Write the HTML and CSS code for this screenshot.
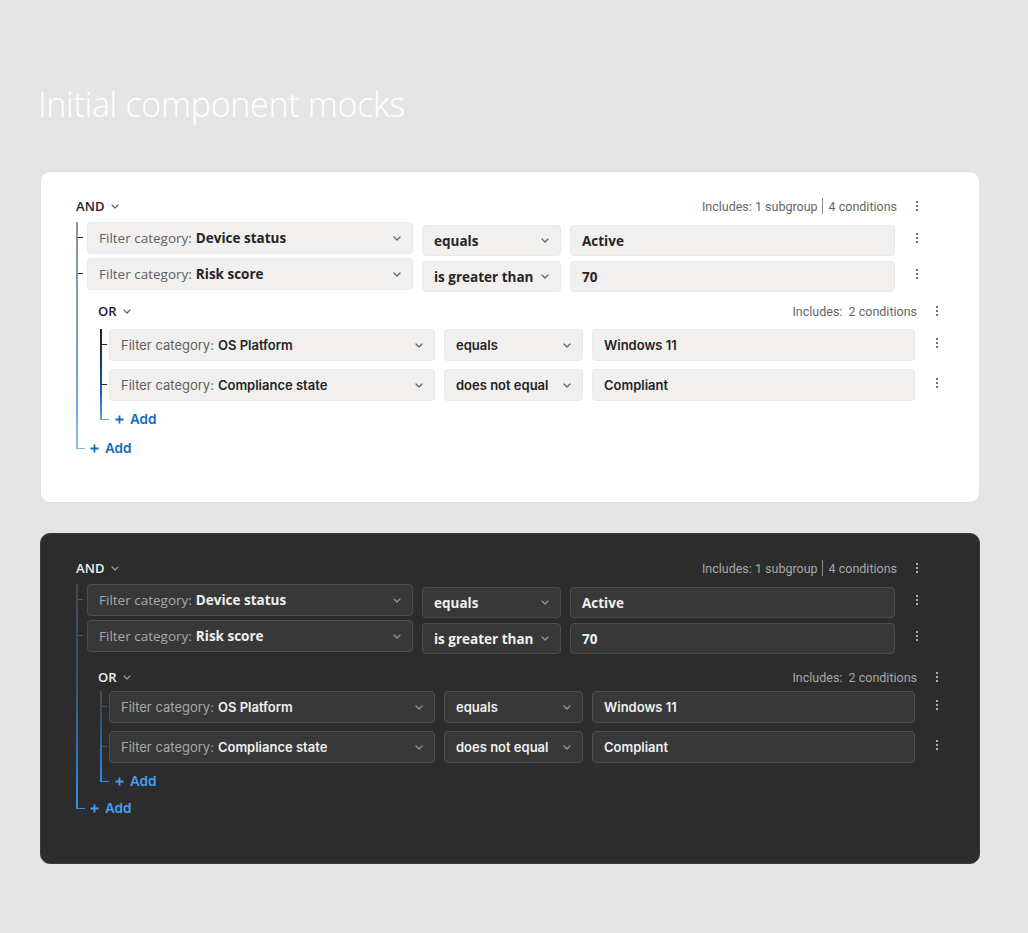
FILE: index.html
```html
<!DOCTYPE html>
<html lang="en">
<head>
<meta charset="utf-8">
<title>Initial component mocks</title>
<link rel="stylesheet" href="styles.css">
</head>
<body>
<main class="page">
  <h1 class="title">Initial component mocks</h1>

  <section class="card card--light">
    <div class="group group--and">
      <div class="group-head">
        <span class="logic">AND <svg class="chev" viewBox="0 0 8 5"><path d="M1 1l3 3 3-3"/></svg></span>
        <span class="includes"><span>Includes: 1 subgroup</span><span class="sep"></span><span>4 conditions</span></span>
        <span class="kebab"><i></i><i></i><i></i></span>
      </div>
      <div class="tree">
        <div class="tree-line"></div>
        <div class="tree-items">
          <div class="cond">
            <span class="tick"></span>
            <div class="field field--cat"><span class="label">Filter category:</span><b>Device status</b><svg class="chev" viewBox="0 0 8 5"><path d="M1 1l3 3 3-3"/></svg></div>
            <div class="field field--op"><b>equals</b><svg class="chev" viewBox="0 0 8 5"><path d="M1 1l3 3 3-3"/></svg></div>
            <div class="field field--val"><b>Active</b></div>
            <span class="kebab"><i></i><i></i><i></i></span>
          </div>
          <div class="cond">
            <span class="tick"></span>
            <div class="field field--cat"><span class="label">Filter category:</span><b>Risk score</b><svg class="chev" viewBox="0 0 8 5"><path d="M1 1l3 3 3-3"/></svg></div>
            <div class="field field--op"><b>is greater than</b><svg class="chev" viewBox="0 0 8 5"><path d="M1 1l3 3 3-3"/></svg></div>
            <div class="field field--val"><b>70</b></div>
            <span class="kebab"><i></i><i></i><i></i></span>
          </div>

          <div class="group group--or">
            <div class="group-head">
              <span class="logic">OR <svg class="chev" viewBox="0 0 8 5"><path d="M1 1l3 3 3-3"/></svg></span>
              <span class="includes">Includes:&nbsp; 2 conditions</span>
              <span class="kebab"><i></i><i></i><i></i></span>
            </div>
            <div class="tree">
              <div class="tree-line"></div>
              <div class="tree-items">
                <div class="cond">
                  <span class="tick"></span>
                  <div class="field field--cat"><span class="label">Filter category:</span><b>OS Platform</b><svg class="chev" viewBox="0 0 8 5"><path d="M1 1l3 3 3-3"/></svg></div>
                  <div class="field field--op"><b>equals</b><svg class="chev" viewBox="0 0 8 5"><path d="M1 1l3 3 3-3"/></svg></div>
                  <div class="field field--val"><b>Windows 11</b></div>
                  <span class="kebab"><i></i><i></i><i></i></span>
                </div>
                <div class="cond">
                  <span class="tick"></span>
                  <div class="field field--cat"><span class="label">Filter category:</span><b>Compliance state</b><svg class="chev" viewBox="0 0 8 5"><path d="M1 1l3 3 3-3"/></svg></div>
                  <div class="field field--op"><b>does not equal</b><svg class="chev" viewBox="0 0 8 5"><path d="M1 1l3 3 3-3"/></svg></div>
                  <div class="field field--val"><b>Compliant</b></div>
                  <span class="kebab"><i></i><i></i><i></i></span>
                </div>
                <div class="add-row">
                  <span class="tick tick--end"></span>
                  <span class="add"><svg class="plus" viewBox="0 0 10 10"><path d="M5 0.5v9M0.5 5h9"/></svg>Add</span>
                </div>
              </div>
            </div>
          </div>

          <div class="add-row add-row--outer">
            <span class="tick tick--end"></span>
            <span class="add"><svg class="plus" viewBox="0 0 10 10"><path d="M5 0.5v9M0.5 5h9"/></svg>Add</span>
          </div>
        </div>
      </div>
    </div>
  </section>

  <section class="card card--dark">
    <div class="group group--and">
      <div class="group-head">
        <span class="logic">AND <svg class="chev" viewBox="0 0 8 5"><path d="M1 1l3 3 3-3"/></svg></span>
        <span class="includes"><span>Includes: 1 subgroup</span><span class="sep"></span><span>4 conditions</span></span>
        <span class="kebab"><i></i><i></i><i></i></span>
      </div>
      <div class="tree">
        <div class="tree-line"></div>
        <div class="tree-items">
          <div class="cond">
            <span class="tick"></span>
            <div class="field field--cat"><span class="label">Filter category:</span><b>Device status</b><svg class="chev" viewBox="0 0 8 5"><path d="M1 1l3 3 3-3"/></svg></div>
            <div class="field field--op"><b>equals</b><svg class="chev" viewBox="0 0 8 5"><path d="M1 1l3 3 3-3"/></svg></div>
            <div class="field field--val"><b>Active</b></div>
            <span class="kebab"><i></i><i></i><i></i></span>
          </div>
          <div class="cond">
            <span class="tick"></span>
            <div class="field field--cat"><span class="label">Filter category:</span><b>Risk score</b><svg class="chev" viewBox="0 0 8 5"><path d="M1 1l3 3 3-3"/></svg></div>
            <div class="field field--op"><b>is greater than</b><svg class="chev" viewBox="0 0 8 5"><path d="M1 1l3 3 3-3"/></svg></div>
            <div class="field field--val"><b>70</b></div>
            <span class="kebab"><i></i><i></i><i></i></span>
          </div>

          <div class="group group--or">
            <div class="group-head">
              <span class="logic">OR <svg class="chev" viewBox="0 0 8 5"><path d="M1 1l3 3 3-3"/></svg></span>
              <span class="includes">Includes:&nbsp; 2 conditions</span>
              <span class="kebab"><i></i><i></i><i></i></span>
            </div>
            <div class="tree">
              <div class="tree-line"></div>
              <div class="tree-items">
                <div class="cond">
                  <span class="tick"></span>
                  <div class="field field--cat"><span class="label">Filter category:</span><b>OS Platform</b><svg class="chev" viewBox="0 0 8 5"><path d="M1 1l3 3 3-3"/></svg></div>
                  <div class="field field--op"><b>equals</b><svg class="chev" viewBox="0 0 8 5"><path d="M1 1l3 3 3-3"/></svg></div>
                  <div class="field field--val"><b>Windows 11</b></div>
                  <span class="kebab"><i></i><i></i><i></i></span>
                </div>
                <div class="cond">
                  <span class="tick"></span>
                  <div class="field field--cat"><span class="label">Filter category:</span><b>Compliance state</b><svg class="chev" viewBox="0 0 8 5"><path d="M1 1l3 3 3-3"/></svg></div>
                  <div class="field field--op"><b>does not equal</b><svg class="chev" viewBox="0 0 8 5"><path d="M1 1l3 3 3-3"/></svg></div>
                  <div class="field field--val"><b>Compliant</b></div>
                  <span class="kebab"><i></i><i></i><i></i></span>
                </div>
                <div class="add-row">
                  <span class="tick tick--end"></span>
                  <span class="add"><svg class="plus" viewBox="0 0 10 10"><path d="M5 0.5v9M0.5 5h9"/></svg>Add</span>
                </div>
              </div>
            </div>
          </div>

          <div class="add-row add-row--outer">
            <span class="tick tick--end"></span>
            <span class="add"><svg class="plus" viewBox="0 0 10 10"><path d="M5 0.5v9M0.5 5h9"/></svg>Add</span>
          </div>
        </div>
      </div>
    </div>
  </section>
</main>
</body>
</html>
```

FILE: styles.css
```css
* { box-sizing: border-box; }

html, body {
  margin: 0;
  padding: 0;
  background: #e5e5e5;
}

body {
  font-family: "Open Sans", "Noto Sans", sans-serif;
  color: #242424;
}

.page {
  width: 1028px;
  padding: 83px 48px 0 40px;
}

.title {
  margin: 0 0 46px -2px;
  font-family: "Open Sans", sans-serif;
  font-weight: 300;
  font-size: 34px;
  line-height: 42px;
  color: #ffffff;
  letter-spacing: -0.3px;
}

.card {
  border-radius: 10px;
  padding: 24px 50px 44px 35px;
}

.card--light {
  background: #ffffff;
  border: 1px solid #e0e0e0;
  margin-bottom: 30px;
}

.card--dark {
  background: #2c2c2c;
  border: 1px solid #3a3a3a;
  padding-top: 24px;
  padding-bottom: 45px;
}

/* group header */
.group-head {
  display: flex;
  align-items: center;
  height: 20px;
  margin-bottom: 6px;
}

.logic {
  display: flex;
  align-items: center;
  gap: 6px;
  font-weight: 600;
  font-size: 13px;
  letter-spacing: 0.1px;
}

.chev {
  width: 8px;
  height: 5px;
  fill: none;
  stroke: #616161;
  stroke-width: 1.2;
  stroke-linecap: round;
  stroke-linejoin: round;
}

.includes {
  margin-left: auto;
  display: flex;
  align-items: center;
  font-family: "Roboto", sans-serif;
  font-weight: 400;
  font-size: 12.5px;
  color: #666666;
  white-space: pre;
}

.sep {
  display: block;
  flex: none;
  width: 1px;
  height: 16px;
  background: #8a8a8a;
  margin: 0 6px 0 4px;
}

.kebab {
  width: 24px;
  margin-left: 8px;
  display: flex;
  flex-direction: column;
  align-items: center;
  gap: 2px;
}

.kebab i {
  display: block;
  width: 2px;
  height: 2px;
  border-radius: 1px;
  background: #424242;
}

/* tree */
.tree {
  display: flex;
}

.tree-line {
  flex: none;
  width: 2px;
  margin-bottom: 9px;
  background: linear-gradient(to bottom, #8d949c 0%, #7f9db8 45%, #6aaae0 80%, #86c0ee 100%);
}

.tree-items {
  flex: 1;
  display: flex;
  flex-direction: column;
}

.cond {
  display: flex;
  align-items: flex-start;
  height: 32px;
}

.cond + .cond { margin-top: 4px; }

.tick {
  flex: none;
  width: 5px;
  height: 1px;
  margin-top: 15px;
  margin-right: 4px;
  background: #242424;
}

.field {
  height: 32px;
  display: flex;
  align-items: center;
  border-radius: 4px;
  background: #f1f0ef;
  border: 1px solid #ebeae9;
  padding: 0 11px;
  font-size: 13.5px;
  white-space: nowrap;
}

.field b { font-weight: 700; }

.field--cat {
  width: 326px;
}

.field--cat .label {
  color: #616161;
  font-weight: 400;
  margin-right: 4px;
}

.field--op {
  width: 139px;
  margin-left: 9px;
  margin-top: 3px;
  height: 31px;
}

.field--val {
  flex: 1;
  margin-left: 9px;
  margin-top: 3px;
  height: 31px;
}

.field .chev {
  margin-left: auto;
  margin-right: 0;
}

.cond .kebab {
  margin-top: 11px;
  margin-left: 10px;
  align-self: flex-start;
}

/* OR group */
.group--or {
  margin: 11px -20px 0 22px;
}

.group--or .group-head {
  margin-bottom: 8px;
  margin-left: -2px;
}

.group--or .tree-line {
  background: linear-gradient(to bottom, #1f1f1f 0%, #143c64 35%, #0f63b5 70%, #5fa8e6 100%);
}

.group--or .tick {
  margin-right: 2px;
}

.group--or .cond + .cond { margin-top: 8px; }

.group--or .field--cat b,
.group--or .field--val b,
.group--or .field--op b {
  font-family: "Inter", sans-serif;
  font-weight: 600;
  font-size: 13px;
}

.group--or .field--op,
.group--or .field--val {
  margin-top: 0;
  height: 32px;
}

.group--or .cond .kebab { margin-top: 9px; }

.group--or .field--cat .label {
  font-family: "Inter", sans-serif;
  font-weight: 400;
  font-size: 13px;
}

/* add rows */
.add-row {
  display: flex;
  align-items: center;
  height: 20px;
  margin-top: 8px;
}

.add-row--outer { margin-top: 9px; }

.tick.tick--end {
  margin: 0 5px 0 0;
  width: 7px;
  background: #7cbbee;
}

.group--or .tick.tick--end {
  background: #5fa8e6;
  margin-right: 6px;
}

.add {
  display: flex;
  align-items: center;
  gap: 6px;
  color: #0f6cbd;
  font-weight: 600;
  font-size: 13.5px;
  font-family: "Inter", sans-serif;
}

.plus {
  width: 9px;
  height: 9px;
  fill: none;
  stroke: #0f6cbd;
  stroke-width: 2;
}

/* dark theme */
.card--dark { color: #f0f0f0; }

.card--dark .chev { stroke: #9a9a9a; }

.card--dark .includes { color: #a8a8a8; }

.card--dark .sep { background: #8a8a8a; }

.card--dark .kebab i { background: #d6d6d6; }

.card--dark .field {
  background: #383838;
  border-color: #4d4d4d;
}

.card--dark .field--cat .label { color: #a8a8a8; }

.card--dark .tick { background: #555555; }

.card--dark .tree-line {
  background: linear-gradient(to bottom, #444a52 0%, #3b5570 45%, #2f79c4 80%, #3a8ee0 100%);
}

.card--dark .group--or .tree-line {
  background: linear-gradient(to bottom, #4a4a4a 0%, #345878 40%, #1f7ad4 75%, #2f8ae4 100%);
}

.card--dark .group--or {
  margin-top: 15px;
}

.card--dark .group--or .group-head { margin-bottom: 4px; }

.card--dark .add-row--outer { margin-top: 7px; }

.card--dark .tick.tick--end { background: #3a8ee0; }

.card--dark .add { color: #479ef5; }

.card--dark .plus { stroke: #479ef5; }
```
